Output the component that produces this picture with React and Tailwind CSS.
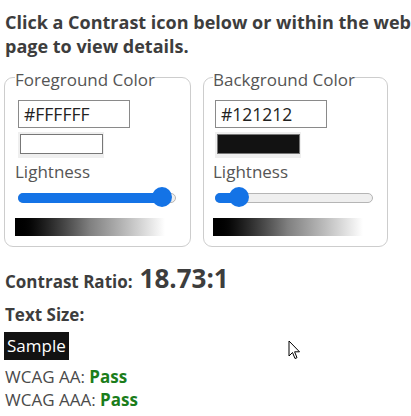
import React from "react";

function Slider({ pct }) {
  return (
    <div className="relative h-[26px] w-[158px]">
      <div className="absolute left-0 right-0 top-[10px] h-[10px] rounded-full border border-[#b5b5b5] bg-[#efefef]" />
      <div
        className="absolute left-0 top-[10px] h-[10px] rounded-full bg-[#1473e6]"
        style={{ width: `${pct}%` }}
      />
      <div
        className="absolute top-[4px] h-[20px] w-[20px] -translate-x-1/2 rounded-full bg-[#1473e6]"
        style={{ left: `${pct}%` }}
      />
    </div>
  );
}

function ColorBox({ legend, hex, swatch, pct, wide, pad, off }) {
  return (
    <fieldset className={`${wide} ${pad} rounded-[9px] border border-[#cdcdcd] pr-2 pb-[10px]`}>
      <legend className="pt-[5px] text-[17px] leading-[18px] text-[#555]">{legend}</legend>
      <div className={`${off} mt-[11px] flex h-[28px] w-[112px] items-center border border-[#8a8a8a] pl-[5px] text-[17.5px] text-[#222]`}>
        {hex}
      </div>
      <div className={`${off} mt-[4px] h-[26px] w-[86px] bg-[#efefef] pl-[2px] pt-[2px] pb-[4px]`}>
        <div className="h-full w-[83px] border border-[#777]" style={{ background: swatch }} />
      </div>
      <div className="mt-[3px] text-[17px] leading-[22px] text-[#555]">Lightness</div>
      <div className={off}>
        <Slider pct={pct} />
      </div>
      <div className="mt-[9px] h-[18px] w-[150px] bg-gradient-to-r from-black via-[#808080] to-white" />
    </fieldset>
  );
}

export default function App() {
  return (
    <div className="relative h-[416px] w-[411px] overflow-hidden bg-white pl-[5px] font-['Open_Sans',sans-serif] text-[#444]">
      <h1 className="pt-[10px] text-[18px] font-bold leading-[24px] text-[#3d3d3d]">
        Click a Contrast icon below or within the web page to view details.
      </h1>
      <div className="ml-[-1px] mt-[8px] flex gap-[12px]">
        <ColorBox legend="Foreground Color" hex="#FFFFFF" swatch="#ffffff" pct={91} wide="w-[187px]" pad="pl-[10px]" off="ml-[3px]" />
        <ColorBox legend="Background Color" hex="#121212" swatch="#121212" pct={15} wide="w-[185px]" pad="pl-[9px]" off="ml-[2px]" />
      </div>
      <div className="mt-[14px] flex items-baseline gap-[7px] text-[#3d3d3d]">
        <span className="text-[17px] font-bold leading-[24px]">Contrast Ratio:</span>
        <span className="text-[26px] font-bold leading-[34px]">18.73:1</span>
      </div>
      <div className="mt-[8px] text-[17px] font-bold leading-[24px] text-[#3d3d3d]">Text Size:</div>
      <div className="ml-[-1px] mt-[5px] inline-block bg-[#121212] px-[3px] text-[17px] leading-[28px] text-white">Sample</div>
      <div className="mt-[5px] text-[17px] leading-[23px] text-[#4a4a4a]">
        WCAG AA: <span className="font-bold text-[#1b7d1b]">Pass</span>
      </div>
      <div className="text-[17px] leading-[23px] text-[#4a4a4a]">
        WCAG AAA: <span className="font-bold text-[#1b7d1b]">Pass</span>
      </div>
      <svg className="absolute left-[288px] top-[340px]" width="14" height="22" viewBox="0 0 14 22">
        <path d="M1 1 L1 16 L4.5 12.5 L7 18.5 L9 17.7 L6.6 11.8 L11.5 11.8 Z" fill="white" stroke="black" strokeWidth="1" strokeLinejoin="miter" />
      </svg>
    </div>
  );
}
